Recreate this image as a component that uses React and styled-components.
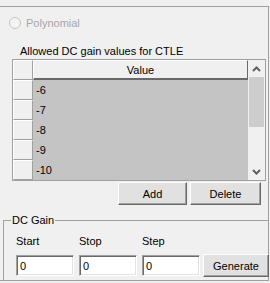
import React from "react"
import styled, { createGlobalStyle } from "styled-components"

const values = ["-6", "-7", "-8", "-9", "-10"]

const GlobalStyle = createGlobalStyle`
  html, body {
    margin: 0;
    padding: 0;
    background: #f0f0f0;
  }
  body {
    font-family: "Liberation Sans", Arial, sans-serif;
    font-size: 11px;
    color: #000;
  }
`

const Frame = styled.div`
  width: 270px;
  height: 283px;
  overflow: hidden;
  box-sizing: border-box;
  padding-top: 6px;
`

const Panel = styled.div`
  width: 269px;
  height: 275px;
  box-sizing: border-box;
  border-top: 1px solid #a0a0a0;
  border-right: 1px solid #a0a0a0;
  border-bottom: 1px solid #a0a0a0;
  display: flex;
  flex-direction: column;
`

const RadioRow = styled.label`
  display: flex;
  align-items: center;
  gap: 5px;
  margin: 10px 0 0 9px;
  height: 12px;
  color: #a6a6a6;
`

const RadioDot = styled.span`
  width: 10px;
  height: 10px;
  border-radius: 50%;
  border: 1px solid #c4c4c4;
  background: #f4f4f4;
`

const Caption = styled.div`
  margin: 16px 0 0 20px;
  line-height: 13px;
`

const Grid = styled.div`
  margin: 1px 0 0 12px;
  width: 254px;
  height: 122px;
  box-sizing: border-box;
  border: 1px solid #a0a0a0;
  display: flex;
  background: #f0f0f0;
`

const Table = styled.div`
  flex: 1;
  display: flex;
  flex-direction: column;
`

const Row = styled.div`
  display: flex;
  height: 20px;
`

const RowHead = styled.div`
  width: 20px;
  box-sizing: border-box;
  background: #f0f0f0;
  border-top: 1px solid #fff;
  border-left: 1px solid #fff;
  border-right: 1px solid #a0a0a0;
  border-bottom: 1px solid #a0a0a0;
`

const ColumnHead = styled.div`
  flex: 1;
  box-sizing: border-box;
  display: flex;
  align-items: center;
  justify-content: center;
  background: #f0f0f0;
  border-top: 1px solid #fff;
  border-left: 1px solid #fff;
  border-right: 1px solid #696969;
  border-bottom: 2px solid #696969;
`

const Cell = styled.div`
  flex: 1;
  display: flex;
  align-items: center;
  padding-left: 3px;
  background: #c4c4c4;
`

const Scrollbar = styled.div`
  width: 17px;
  display: flex;
  flex-direction: column;
  align-items: center;
  background: #f0f0f0;
`

const Arrow = styled.div`
  height: 17px;
  display: flex;
  align-items: center;
  justify-content: center;
`

const Thumb = styled.div`
  width: 15px;
  height: 50px;
  background: #cdcdcd;
`

const Track = styled.div`
  flex: 1;
`

const ButtonRow = styled.div`
  display: flex;
  gap: 3px;
  margin: 1px 0 0 118px;
`

const Button = styled.button`
  width: ${(p) => p.$w}px;
  height: ${(p) => p.$h || 23}px;
  padding: 0;
  font: inherit;
  color: #000;
  background: #e1e1e1;
  border: 1px solid;
  border-color: #fff #696969 #696969 #fff;
  box-shadow: inset -1px -1px 0 #a0a0a0;
`

const Group = styled.fieldset`
  margin: 9px 0 0 3px;
  padding: 0;
  flex: 1;
  border: none;
  border-top: 1px solid #a0a0a0;
  border-left: 1px solid #a0a0a0;
  min-width: 0;
`

const Legend = styled.legend`
  margin-left: 7px;
  padding: 0 1px;
  line-height: 13px;
`

const Fields = styled.div`
  display: grid;
  grid-template-columns: 58px 58px 58px 66px;
  column-gap: 5px;
  margin: 8px 0 0 12px;
  align-items: end;
`

const FieldLabel = styled.div`
  line-height: 13px;
  margin-bottom: 6px;
`

const Input = styled.input`
  width: 58px;
  height: 21px;
  box-sizing: border-box;
  padding: 0 0 0 3px;
  font: inherit;
  background: #fff;
  border: 1px solid;
  border-color: #a0a0a0 #fff #fff #a0a0a0;
  box-shadow: inset 1px 1px 0 #696969, inset -1px -1px 0 #e3e3e3;
  outline: none;
`

const GenerateSlot = styled.div`
  grid-row: 2;
  grid-column: 4;
  margin-left: -2px;
  margin-bottom: -1px;
`

const Chevron = ({ up }) => (
  <svg width="9" height="6" viewBox="0 0 9 6">
    <polyline
      points={up ? "1,5 4.5,1.5 8,5" : "1,1 4.5,4.5 8,1"}
      fill="none"
      stroke="#606060"
      strokeWidth="2"
    />
  </svg>
)

const App = () => (
  <Frame>
    <GlobalStyle />
    <Panel>
      <RadioRow>
        <RadioDot />
        Polynomial
      </RadioRow>
      <Caption>Allowed DC gain values for CTLE</Caption>
      <Grid>
        <Table>
          <Row>
            <RowHead />
            <ColumnHead>Value</ColumnHead>
          </Row>
          {values.map((v) => (
            <Row key={v}>
              <RowHead />
              <Cell>{v}</Cell>
            </Row>
          ))}
        </Table>
        <Scrollbar>
          <Arrow>
            <Chevron up />
          </Arrow>
          <Thumb />
          <Track />
          <Arrow>
            <Chevron />
          </Arrow>
        </Scrollbar>
      </Grid>
      <ButtonRow>
        <Button $w={69}>Add</Button>
        <Button $w={71}>Delete</Button>
      </ButtonRow>
      <Group>
        <Legend>DC Gain</Legend>
        <Fields>
          <FieldLabel>Start</FieldLabel>
          <FieldLabel>Stop</FieldLabel>
          <FieldLabel>Step</FieldLabel>
          <div />
          <Input defaultValue="0" />
          <Input defaultValue="0" />
          <Input defaultValue="0" />
          <GenerateSlot>
            <Button $w={66} $h={23}>Generate</Button>
          </GenerateSlot>
        </Fields>
      </Group>
    </Panel>
  </Frame>
)

export default App
